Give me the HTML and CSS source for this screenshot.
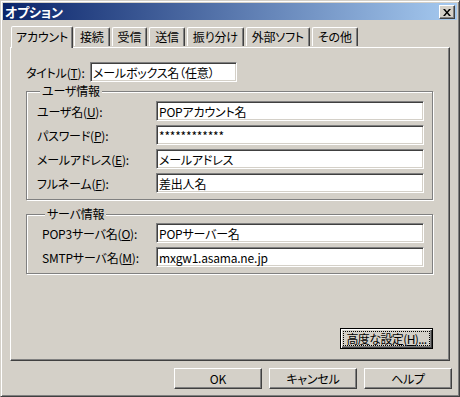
FILE: index.html
```html
<!DOCTYPE html>
<html lang="ja">
<head>
  <meta charset="UTF-8">
  <title>オプション</title>
  <link rel="stylesheet" href="styles.css">
</head>
<body>
  <div class="window">
    <!-- タイトルバー -->
    <div class="titlebar">
      <span class="title">オプション</span>
      <span class="close-btn">
        <svg width="8" height="7" viewBox="0 0 8 7">
          <path d="M0 0h2l2 2.5L6 0h2L5 3.5 8 7H6L4 4.5 2 7H0l3-3.5z" fill="#000"/>
        </svg>
      </span>
    </div>

    <!-- タブ -->
    <div class="tabs">
      <div class="tab active">アカウント</div>
      <div class="tab">接続</div>
      <div class="tab">受信</div>
      <div class="tab">送信</div>
      <div class="tab">振り分け</div>
      <div class="tab">外部ソフト</div>
      <div class="tab">その他</div>
    </div>

    <div class="panel">
      <div class="row title-row">
        <label>タイトル(<u>T</u>):</label>
        <input class="field title-field" type="text" value="メールボックス名（任意）">
      </div>

      <fieldset class="group user-group">
        <legend>ユーザ情報</legend>
        <div class="row">
          <label>ユーザ名(<u>U</u>):</label>
          <input class="field" type="text" value="POPアカウント名">
        </div>
        <div class="row">
          <label>パスワード(<u>P</u>):</label>
          <input class="field" type="text" value="************">
        </div>
        <div class="row">
          <label>メールアドレス(<u>E</u>):</label>
          <input class="field" type="text" value="メールアドレス">
        </div>
        <div class="row">
          <label>フルネーム(<u>F</u>):</label>
          <input class="field" type="text" value="差出人名">
        </div>
      </fieldset>

      <fieldset class="group server-group">
        <legend>サーバ情報</legend>
        <div class="row">
          <label>POP3サーバ名(<u>O</u>):</label>
          <input class="field" type="text" value="POPサーバー名">
        </div>
        <div class="row">
          <label>SMTPサーバ名(<u>M</u>):</label>
          <input class="field" type="text" value="mxgw1.asama.ne.jp">
        </div>
      </fieldset>

      <div class="panel-foot">
        <button class="btn default"><span class="focus">高度な設定(<u>H</u>)...</span></button>
      </div>
    </div>

    <!-- 下部ボタン -->
    <div class="buttons">
      <button class="btn">OK</button>
      <button class="btn">キャンセル</button>
      <button class="btn">ヘルプ</button>
    </div>
  </div>
</body>
</html>
```

FILE: styles.css
```css
/* 基本 */
* {
  box-sizing: border-box;
}
body {
  margin: 0;
  background: #d4d0c8;
  color: #000;
  font-family: "Noto Sans CJK JP", "Liberation Sans", sans-serif;
  font-size: 12px;
  font-feature-settings: "palt";
  letter-spacing: -0.2px;
}

/* ウィンドウ枠 */
.window {
  width: 460px;
  height: 397px;
  border: 1px solid;
  border-color: #d4d0c8 #404040 #404040 #d4d0c8;
  box-shadow: inset 1px 1px 0 #fff, inset -1px -1px 0 #808080;
  padding: 2px;
  display: flex;
  flex-direction: column;
}

/* タイトルバー */
.titlebar {
  height: 17px;
  background: linear-gradient(to right, #0a246a, #a6caf0);
  display: flex;
  align-items: center;
  justify-content: space-between;
  padding: 0 2px 0 2px;
}
.title {
  color: #fff;
  font-weight: bold;
  font-size: 13px;
  line-height: 17px;
}
.close-btn {
  width: 16px;
  height: 14px;
  background: #d4d0c8;
  border: 1px solid;
  border-color: #fff #404040 #404040 #fff;
  box-shadow: inset -1px -1px 0 #808080;
  display: flex;
  align-items: center;
  justify-content: center;
  margin-top: 1px;
}

/* タブ */
.tabs {
  display: flex;
  align-items: flex-end;
  gap: 2px;
  margin: 6px 0 0 8px;
  position: relative;
  z-index: 1;
}
.tab {
  height: 19px;
  padding: 0 5px;
  line-height: 17px;
  border: 1px solid;
  border-bottom: none;
  border-color: #fff #404040 transparent #fff;
  border-radius: 2px 2px 0 0;
  box-shadow: inset -1px 0 0 #808080;
  margin-bottom: 1px;
}
.tab.active {
  height: 22px;
  padding: 0 4px;
  margin: 0 -1px -1px 0;
  background: #d4d0c8;
  line-height: 19px;
}

/* タブの中身 */
.panel {
  width: 440px;
  height: 314px;
  margin-left: 7px;
  border: 1px solid;
  border-color: #fff #404040 #404040 #fff;
  box-shadow: inset -1px -1px 0 #808080;
  padding: 14px 16px 11px 15px;
  display: flex;
  flex-direction: column;
}

.row {
  display: flex;
  align-items: center;
}
.row label {
  white-space: nowrap;
}
.title-row label {
  width: 64px;
}

.field {
  height: 20px;
  width: 268px;
  border: 1px solid;
  border-color: #808080 #fff #fff #808080;
  box-shadow: inset 1px 1px 0 #404040, inset -1px -1px 0 #d4d0c8;
  background: #fff;
  padding: 0 2px;
  font: inherit;
  font-feature-settings: "palt";
  letter-spacing: -0.2px;
  color: #000;
  outline: none;
}
.title-field {
  width: 147px;
}

/* グループ枠 */
.group {
  margin: 2px 0 0;
  border: 1px solid #808080;
  box-shadow: inset 1px 1px 0 #fff, 1px 1px 0 #fff;
  display: flex;
  flex-direction: column;
  gap: 4px;
  min-width: 0;
}
.group legend {
  padding: 0 2px;
  margin-left: 3px;
  line-height: 14px;
  background: #d4d0c8;
}
.user-group {
  padding: 3px 8px 6px 10px;
}
.user-group label {
  width: 119px;
}
.server-group {
  margin-top: 7px;
  padding: 2px 8px 6px 15px;
}
.server-group label {
  width: 114px;
}

/* ボタン */
.btn {
  height: 21px;
  width: 88px;
  background: #d4d0c8;
  border: 1px solid;
  border-color: #fff #404040 #404040 #fff;
  box-shadow: inset -1px -1px 0 #808080;
  font: inherit;
  font-feature-settings: "palt";
  letter-spacing: -0.2px;
  color: #000;
  padding: 0;
}
.btn.default {
  width: 93px;
  border: 1px solid #000;
  box-shadow: inset 1px 1px 0 #fff, inset -1px -1px 0 #404040, inset -2px -2px 0 #808080;
}
.btn .focus {
  display: block;
  margin: 0 2px;
  border: 1px dotted #000;
  line-height: 13px;
  white-space: nowrap;
  letter-spacing: -0.6px;
}

.panel-foot {
  margin-top: auto;
  display: flex;
  justify-content: flex-end;
}

.buttons {
  display: flex;
  justify-content: flex-end;
  gap: 7px;
  margin-top: 7px;
  padding-right: 5px;
}
```
